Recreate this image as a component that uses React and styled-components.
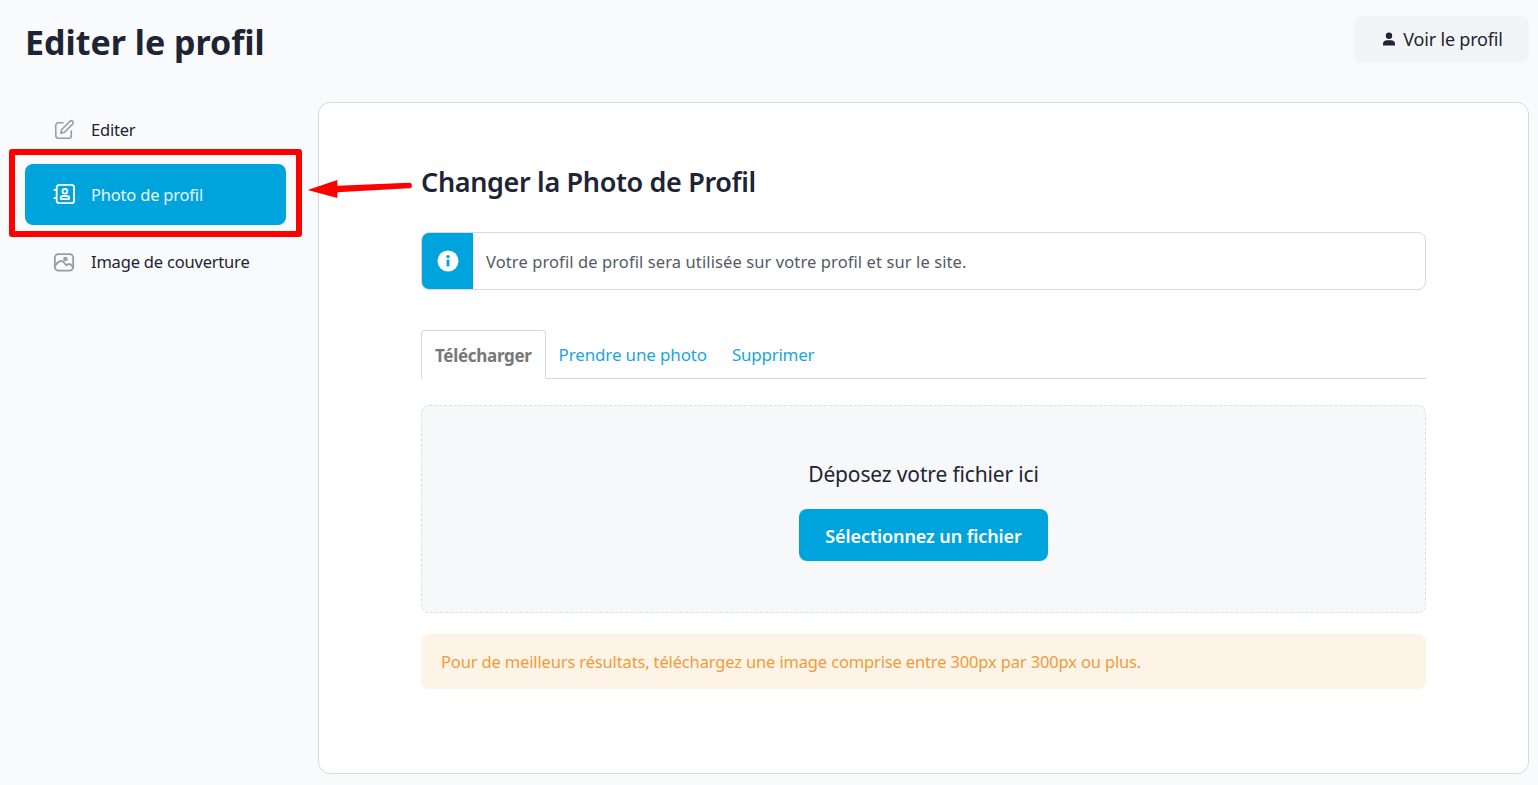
import React from 'react';
import styled, { createGlobalStyle } from 'styled-components';

const GlobalStyle = createGlobalStyle`
  html, body {
    margin: 0;
    padding: 0;
    background: #f9fafc;
    font-family: "Noto Sans", "Open Sans", sans-serif;
    color: #1e2433;
  }
  * { box-sizing: border-box; }
`;

const Page = styled.div`
  position: relative;
  width: 1538px;
  height: 785px;
  overflow: hidden;
  padding: 16px 9px 0 25px;
`;

const Header = styled.header`
  display: flex;
  justify-content: space-between;
  align-items: flex-start;
  height: 86px;
`;

const Title = styled.h1`
  margin: 3px 0 0;
  font-size: 34px;
  line-height: 46px;
  font-weight: 700;
  color: #1e2433;
`;

const ViewButton = styled.button`
  display: flex;
  align-items: center;
  justify-content: center;
  gap: 7px;
  width: 175px;
  height: 47px;
  border: 0;
  border-radius: 8px;
  background: #f3f4f6;
  color: #1e2433;
  font: 400 18px "Noto Sans", sans-serif;
  letter-spacing: -0.2px;
  padding: 0 0 2px 2px;
`;

const Columns = styled.div`
  display: flex;
  gap: 32px;
`;

const Sidebar = styled.nav`
  width: 261px;
  display: flex;
  flex-direction: column;
  gap: 6px;
`;

const NavItem = styled.a`
  display: flex;
  align-items: center;
  gap: 16px;
  height: 61px;
  padding-left: 28px;
  padding-bottom: 1px;
  border-radius: 8px;
  font-size: 16.5px;
  letter-spacing: -0.2px;
  color: ${(p) => (p.$active ? '#e8f6fc' : '#1e2433')};
  background: ${(p) => (p.$active ? '#00a4dc' : 'transparent')};
  svg { color: ${(p) => (p.$active ? '#ffffff' : '#9a9ca5')}; flex: none; }
  &:first-child { height: 56px; }
`;

const Card = styled.main`
  width: 1211px;
  height: 672px;
  background: #fff;
  border: 1px solid #d6d9e0;
  border-radius: 12px;
  padding: 60px 102px 0;
`;

const CardTitle = styled.h2`
  margin: 0 0 31px;
  font-size: 27px;
  line-height: 38px;
  font-weight: 600;
  color: #1e2433;
  letter-spacing: -0.35px;
`;

const Notice = styled.div`
  display: flex;
  align-items: center;
  height: 58px;
  border: 1px solid #d6d9e0;
  border-radius: 8px;
  overflow: hidden;
`;

const NoticeIcon = styled.div`
  width: 51px;
  align-self: stretch;
  background: #00a4dc;
  display: flex;
  align-items: center;
  justify-content: center;
  margin-right: 13px;
`;

const NoticeText = styled.span`
  font-size: 16.5px;
  letter-spacing: 0.1px;
  color: #555a64;
`;

const Tabs = styled.div`
  display: flex;
  align-items: stretch;
  height: 49px;
  margin-top: 40px;
  border-bottom: 1px solid #d6d9e0;
`;

const Tab = styled.a`
  display: flex;
  align-items: center;
  padding: 0 13px;
  font-size: 17px;
  letter-spacing: -0.15px;
  color: #1ba5de;
  &:last-child { margin-left: -1px; letter-spacing: -0.25px; }
  ${(p) =>
    p.$active &&
    `
    font-weight: 700;
    letter-spacing: -0.3px;
    padding-top: 2px;
    color: #777;
    background: #fff;
    border: 1px solid #d6d9e0;
    border-bottom-color: #fff;
    border-radius: 4px 4px 0 0;
    margin-bottom: -1px;
  `}
`;

const DropZone = styled.div`
  height: 208px;
  margin-top: 26px;
  background: #f7f8fa;
  border: 1px dashed #dcdfe5;
  border-radius: 8px;
  display: flex;
  flex-direction: column;
  align-items: center;
  padding-top: 52px;
`;

const DropText = styled.div`
  font-size: 21px;
  line-height: 32px;
  letter-spacing: -0.15px;
  color: #1e2433;
`;

const PickButton = styled.button`
  width: 249px;
  height: 52px;
  margin-top: 19px;
  padding: 2px 0 0;
  border: 0;
  border-radius: 8px;
  background: #00a4dc;
  color: #fff;
  font: 600 18px "Noto Sans", sans-serif;
  letter-spacing: -0.1px;
`;

const Hint = styled.div`
  display: flex;
  align-items: center;
  height: 55px;
  margin-top: 21px;
  padding-left: 20px;
  background: #fdf3e7;
  border-radius: 8px;
  font-size: 16.5px;
  letter-spacing: -0.15px;
  color: #ee9d38;
`;

const RedFrame = styled.div`
  position: absolute;
  left: 9px;
  top: 149px;
  width: 293px;
  height: 88px;
  border: 6px solid #ff0000;
  border-radius: 3px;
`;

const ArrowMark = styled.svg`
  position: absolute;
  left: 304px;
  top: 176px;
`;

const iconProps = {
  width: 22,
  height: 22,
  viewBox: '0 0 24 24',
  fill: 'none',
  stroke: 'currentColor',
  strokeWidth: 1.7,
  strokeLinecap: 'round',
  strokeLinejoin: 'round',
};

const EditIcon = () => (
  <svg {...iconProps}>
    <path d="M11 4H6a3 3 0 0 0-3 3v11a3 3 0 0 0 3 3h11a3 3 0 0 0 3-3v-5" />
    <path d="M18.4 2.6a2.1 2.1 0 0 1 3 3L12.5 14.5 8.5 15.5l1-4z" />
  </svg>
);

const ContactIcon = () => (
  <svg {...iconProps} strokeWidth={2}>
    <rect x="4" y="2" width="19" height="20" rx="3" />
    <circle cx="13" cy="9" r="2.6" />
    <path d="M8.5 17.5v-.8a2.5 2.5 0 0 1 2.5-2.5h4a2.5 2.5 0 0 1 2.5 2.5v.8z" />
    <path d="M1.5 7.5h2M1.5 16.5h2" />
  </svg>
);

const ImageIcon = () => (
  <svg {...iconProps} strokeWidth={2}>
    <rect x="2" y="4.5" width="20" height="18" rx="4" />
    <circle cx="13.6" cy="9.8" r="1.5" />
    <path d="M2.5 17c2-3 4.5-5 6.8-5s3.5 3 5.2 4.8c1-1 2-1.5 3-1.5s3 1.5 4 3" />
  </svg>
);

const UserIcon = () => (
  <svg width="14" height="14" viewBox="0 0 14 14" fill="#1e2433">
    <circle cx="7" cy="3.8" r="3.2" />
    <path d="M1 13.5v-1.7C1 9.6 2.8 8.3 5 8.3h4c2.2 0 4 1.3 4 3.5v1.7z" />
  </svg>
);

const InfoIcon = () => (
  <svg width="22" height="22" viewBox="0 0 22 22">
    <circle cx="11" cy="11" r="10.5" fill="#fff" />
    <rect x="9.6" y="9.4" width="2.8" height="7" rx="0.6" fill="#00a4dc" />
    <circle cx="11" cy="6.6" r="1.7" fill="#00a4dc" />
  </svg>
);

function App() {
  return (
    <Page>
      <GlobalStyle />
      <Header>
        <Title>Editer le profil</Title>
        <ViewButton>
          <UserIcon />
          Voir le profil
        </ViewButton>
      </Header>
      <Columns>
        <Sidebar>
          <NavItem>
            <EditIcon />
            Editer
          </NavItem>
          <NavItem $active>
            <ContactIcon />
            Photo de profil
          </NavItem>
          <NavItem>
            <ImageIcon />
            Image de couverture
          </NavItem>
        </Sidebar>
        <Card>
          <CardTitle>Changer la Photo de Profil</CardTitle>
          <Notice>
            <NoticeIcon>
              <InfoIcon />
            </NoticeIcon>
            <NoticeText>
              Votre profil de profil sera utilisée sur votre profil et sur le site.
            </NoticeText>
          </Notice>
          <Tabs>
            <Tab $active>Télécharger</Tab>
            <Tab>Prendre une photo</Tab>
            <Tab>Supprimer</Tab>
          </Tabs>
          <DropZone>
            <DropText>Déposez votre fichier ici</DropText>
            <PickButton>Sélectionnez un fichier</PickButton>
          </DropZone>
          <Hint>
            Pour de meilleurs résultats, téléchargez une image comprise entre 300px par 300px ou plus.
          </Hint>
        </Card>
      </Columns>
      <RedFrame />
      <ArrowMark width="112" height="24" viewBox="0 0 112 24">
        <path d="M3.7 14 L33.3 4 L33.5 9.7 L105 6.7 a2.8 2.8 0 0 1 .2 5.6 L33.5 16.3 L33.3 22 Z" fill="#ff0000" />
      </ArrowMark>
    </Page>
  );
}

export default App;
